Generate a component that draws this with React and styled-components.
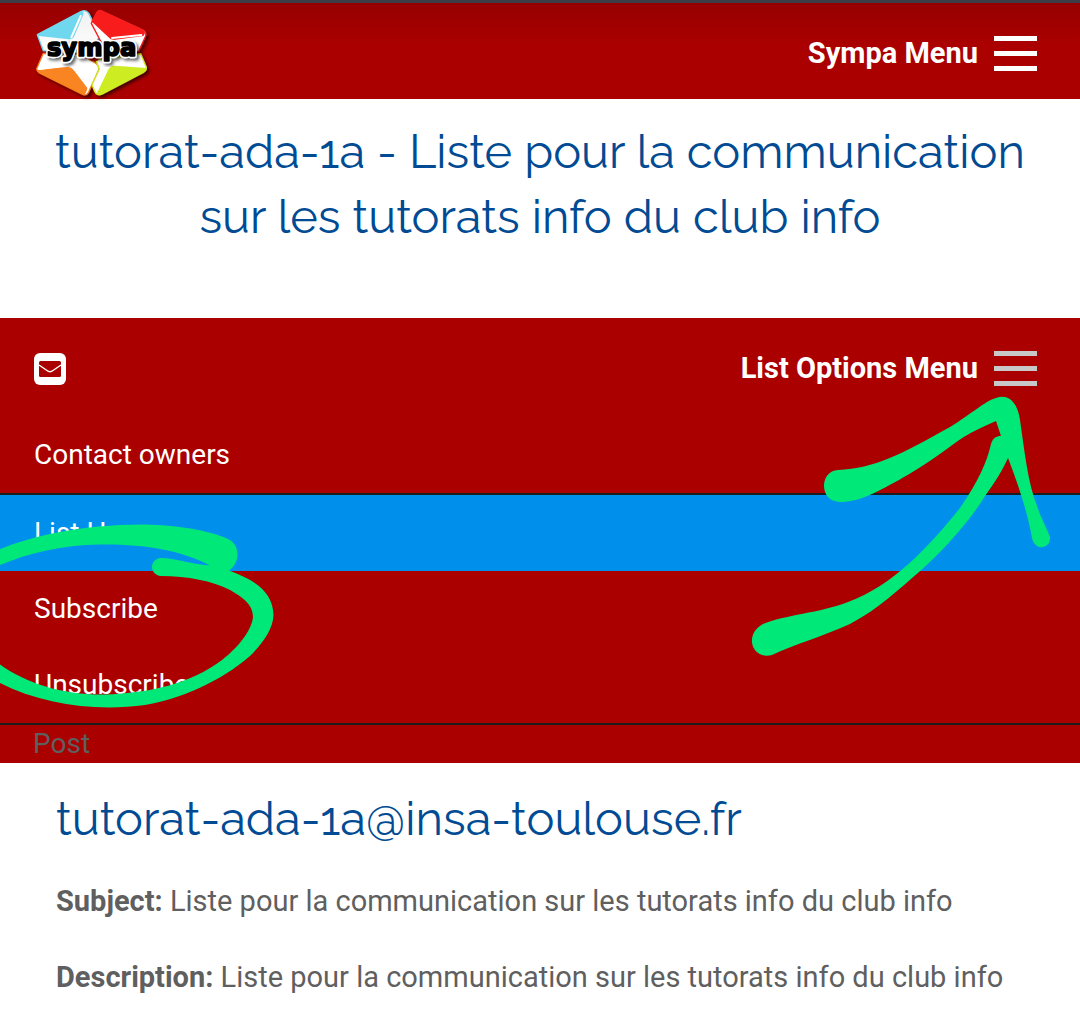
import React from 'react'
import styled, { createGlobalStyle } from 'styled-components';

const options = [
  { label: 'Contact owners', line: true },
  { label: 'List Home', active: true },
  { label: 'Subscribe' },
  { label: 'Unsubscribe', line: true },
];

const Logo = () => (
  <svg width="120" height="94" viewBox="42 19 360 282" role="img" aria-label="Sympa">
    <defs>
      <filter id="shade" x="-10%" y="-10%" width="125%" height="125%">
        <feDropShadow dx="7" dy="7" stdDeviation="5" floodColor="#000" floodOpacity="0.6" />
      </filter>
      <linearGradient id="shine" x1="0" y1="0" x2="0" y2="1">
        <stop offset="0" stopColor="#f0f0f0" />
        <stop offset="1" stopColor="#fff" />
      </linearGradient>
    </defs>
    {/* four folded wings, each a white card with a coloured flap */}
    <g filter="url(#shade)" strokeLinejoin="round">
      <path d="M52 102 L184 32 Q198 26 206 38 L239 104 L214 158 L70 150 Z" fill="url(#shine)" stroke="#6fd8ee" strokeWidth="4" />
      <path d="M231 34 Q236 26 248 32 L370 88 Q380 94 377 106 L356 152 L262 160 L214 68 Z" fill="#fff" stroke="#f81c1c" strokeWidth="4" />
      <path d="M70 158 L50 204 Q50 212 58 217 L188 281 Q200 286 206 274 L237 206 Q238 196 228 188 L180 160 Z" fill="#fff" stroke="#f07c1c" strokeWidth="4" />
      <path d="M362 160 L379 200 Q380 210 370 215 L244 281 Q230 286 224 272 L216 252 L238 206 L228 178 Z" fill="#fff" stroke="#cdec22" strokeWidth="4" />
      <path d="M52 102 L184 32 Q192 30 190 42 L162 108 Q158 116 146 116 L56 106Z" fill="#6fd8ee" />
      <path d="M231 34 Q236 26 248 32 L370 88 Q380 96 370 106 L280 118 Q270 116 264 108 L214 62Z" fill="#f81c1c" />
      <path d="M51 208 L146 198 Q156 200 164 212 L202 262 Q198 286 186 280 L58 217Z" fill="#f88420" />
      <path d="M264 206 Q272 194 286 195 L379 202 Q380 210 370 215 L244 281 Q230 284 232 270Z" fill="#cdec22" />
      <path d="M154 110 L182 46 M276 112 L364 103 M60 205 L144 193 M232 268 L264 202" fill="none" stroke="#fff" strokeWidth="6" strokeLinecap="round" />
      <path d="M198 166 L222 164 L240 172 L232 180 L214 180Z" fill="#b00" />
    </g>
    <g textAnchor="middle" fontFamily="DejaVu Sans" fontWeight="bold" fontSize="73" strokeLinejoin="round">
      <text x="215" y="167" fill="#000" stroke="#fff" strokeWidth="14" filter="url(#shade)" aria-hidden="true">sympa</text>
      <text x="215" y="167" fill="#000" stroke="#000" strokeWidth="5">sympa</text>
    </g>
  </svg>
)

const MailIcon = () => (
  <svg width="32" height="32" viewBox="0 0 32 32" aria-hidden="true">
    <rect width="32" height="32" rx="6" fill="#fff" />
    <rect x="5" y="8" width="22" height="16" rx="1.5" fill="#a00" />
    <path d="M5 12 L13 17.5 Q16 20 19 17.5 L27 12" fill="none" stroke="#fff" strokeWidth="1.4" />
  </svg>
)

const Burger = ({ label, muted }) => (
  <MenuButton type="button">
    {label}
    <Bars $muted={muted}><i /><i /><i /></Bars>
  </MenuButton>
)

const App = () => {
  return (
    <>
      <GlobalStyle />
      <TopBar>
        <MenuBar>
          <LogoLink href="#home"><Logo /></LogoLink>
          <Burger label="Sympa Menu" />
        </MenuBar>
      </TopBar>
      <ListTitle>
        <Heading>tutorat-ada-1a - Liste pour la communication sur les tutorats info du club info</Heading>
      </ListTitle>
      <Panel>
        <MenuBar>
          <IconLink href="#contact" aria-label="Contact"><MailIcon /></IconLink>
          <Burger label="List Options Menu" muted />
        </MenuBar>
        <Options>
          {options.map((o) => (
            <Option key={o.label} $active={o.active} $line={o.line}>
              <a href="#list">{o.label}</a>
            </Option>
          ))}
        </Options>
        <Post>Post</Post>
        <LoopMark width="280" height="200" viewBox="0 518 280 200" aria-hidden="true">
          <path d="M-2 550 C30 536 85 524 145 524.5 C175 525 208 530 228 539 C241 545 240 563 229 570.5 C255 580 273 592 273.500 615 C273 630 262 644 250 656 C220 682 180 699 145 705 C95 712 40 704 -2 682 L-2 663 C25 683 62 695 105 694.500 C150 693 190 684 222 660 C240 646 252 629 253 617 C253 604 242 597 230 590 C212 581 188 576 161 576 C149 575 149 559 161 558 C175 558 190 564 210 565.500 C180 550 145 544 100 544.500 C60 545 25 554 -2 566 Z" />
        </LoopMark>
        <ArrowMark width="340" height="272" viewBox="740 390 340 272" aria-hidden="true">
          <path d="M838 470 C875 468 900 455 950 427 C970 415 985 401 996 398 C1010 393 1018 405 1020 420 C1025 455 1028 483 1037 506 C1041 518 1047 529 1050 537 C1051 549 1035 552 1032 538 C1028 514 1018 484 1008 458 C1002 471 996 481 985 496 C970 521 942 552 919 572 C900 588 880 608 850 624 C824 636 795 644 772 655 C751 660 744 634 763 624 C784 615 820 613 848 602 C892 586 928 548 960 508 C978 482 987 462 991 444 C993 438 996 436 1001 436 L996 421 C983 427 968 433 955 443 C920 469 895 483 872 494 C859 500 849 502 840 502 C819 502 819 471 838 470 Z" />
        </ArrowMark>
      </Panel>
      <Content>
        <Heading as="h2">tutorat-ada-1a@insa-toulouse.fr</Heading>
        <p><b>Subject:</b> Liste pour la communication sur les tutorats info du club info</p>
        <p><b>Description:</b> Liste pour la communication sur les tutorats info du club info</p>
      </Content>
    </>
  )
}

export default App

const GlobalStyle = createGlobalStyle`
*{
box-sizing:border-box;
}

body{
margin:0;
background-color:#fff;
color:#5f5f5f;
font-family:Roboto, sans-serif;
font-size:29px;
line-height:44px;
}
`

const TopBar = styled.header`
border-top:3px solid #3d3d48;
background:linear-gradient(#960000, #a00 40px);
`

const MenuBar = styled.div`
display:flex;
justify-content:space-between;
align-items:center;
padding:33px 43px 28px 34px;
`

const LogoLink = styled.a`
display:flex;
margin:-30px 0;
`

const IconLink = styled.a`
display:flex;
`

const MenuButton = styled.button`
display:flex;
align-items:center;
gap:16px;
padding:0;
border:0;
background:none;
color:#fff;
font:bold 29px/35px Roboto, sans-serif;
cursor:pointer;
`

const Bars = styled.span`
display:flex;
flex-direction:column;
gap:10px;
width:43px;

i{
height:5px;
background-color:${(p) => (p.$muted ? '#c8c8c8' : '#fff')};
}
`

const ListTitle = styled.section`
padding:20px 48px 69px;
text-align:center;
`

const Heading = styled.h1`
margin:0;
color:#004b93;
font-family:Raleway, Lato, sans-serif;
font-size:47px;
font-weight:400;
line-height:65px;
`

const Panel = styled.nav`
position:relative;
background-color:#a00;
`

const Options = styled.ul`
list-style:none;
margin:0;
padding:3px 0 0;
`

const Option = styled.li`
background-color:${(p) => (p.$active ? '#008feb' : 'transparent')};
border-bottom:${(p) => (p.$line ? '2px solid #1c1c1c' : '0')};

a{
display:block;
padding:16px 34px;
color:#fff;
font-size:28px;
text-decoration:none;
}
`

const Post = styled.div`
padding:0 33px;
font-size:28px;
line-height:38px;
`

const Mark = styled.svg`
position:absolute;
fill:#00e878;
pointer-events:none;
`

const LoopMark = styled(Mark)`
left:0;
top:200px;
`

const ArrowMark = styled(Mark)`
right:0;
top:72px;
`

const Content = styled.main`
padding:23px 56px 0;

h2{
margin-bottom:28px;
}

p{
margin:0 0 32px;
}
`
